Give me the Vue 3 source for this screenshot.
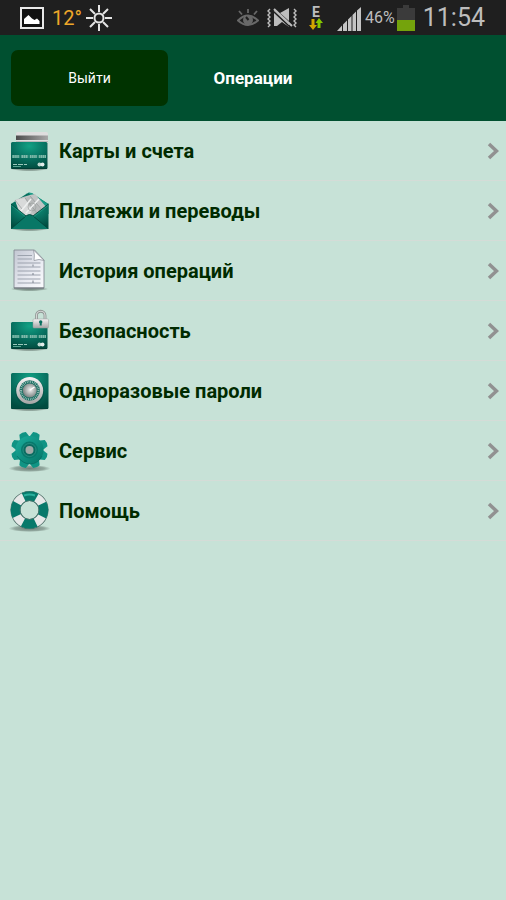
<template>
  <div class="screen">
    <div class="status-bar">
      <div class="status-left">
        <svg class="icon-picture" width="24" height="22" viewBox="0 0 24 22">
          <rect x="1" y="1" width="22" height="20" fill="#111" stroke="#e8e8e8" stroke-width="2" />
          <path d="M4 17V12L8.500 8L12 11.500L14.500 13L17 11.500L19.500 14V17Z" fill="#fff" />
        </svg>
        <span class="temperature">12°</span>
        <svg class="icon-sun" width="26" height="26" viewBox="0 0 26 26" fill="none" stroke="#e4e4e4" stroke-width="2">
          <circle cx="13" cy="13" r="4.500" />
          <path d="M13 0V7M13 19V26M0 13H7M19 13H26M4 4L9 9M17 17L22 22M22 4L17 9M9 17L4 22" />
        </svg>
      </div>

      <div class="status-right">
        <svg width="22" height="18" viewBox="0 0 22 18" fill="none" stroke="#686868">
          <path d="M1 11.500Q11 1.500 21 11.500Q11 20.500 1 11.500Z" stroke-width="2" />
          <circle cx="11" cy="11" r="5" fill="#686868" stroke="none" />
          <path d="M9 8L11.500 11" stroke="#1f1f1f" stroke-width="2" />
          <path d="M11 0V4M2 2L5 5.500M20 2L17 5.500" stroke-width="1.800" />
        </svg>
        <svg class="icon-mute" width="30" height="20" viewBox="0 0 30 20" fill="none" stroke="#bdbdbd">
          <path d="M3 1L1 3L3 5L1 7L3 9L1 11L3 13L1 15L3 17L1 19" stroke-width="1.400" />
          <path d="M27 1L29 3L27 5L29 7L27 9L29 11L27 13L29 15L27 17L29 19" stroke-width="1.400" />
          <path d="M7 4V18H10L15 14L22 19V16L7 2Z" fill="#bdbdbd" stroke="none" />
          <path d="M13 5L22 0V13Z" fill="#bdbdbd" stroke="none" />
          <path d="M6 3L23 19" stroke="#1f1f1f" stroke-width="1.500" />
          <path d="M7 1L25 18" stroke-width="2" />
        </svg>
        <div class="network">
          <span class="network-type">E</span>
          <svg width="14" height="12" viewBox="0 0 14 12">
            <path d="M2.500 1H5.500V7H8L4 12L0 7H2.500Z" fill="#d3a500" />
            <path d="M8.500 10H11.500V5H14L10 0L6.500 5H8.500Z" fill="#86c800" />
          </svg>
        </div>
        <svg class="icon-signal" width="24" height="24" viewBox="0 0 24 24">
          <path d="M0 24L5 18.500V24ZM6 24V17.500L10 13.500V24ZM11 24V12.500L14.500 9V24ZM15.500 24V8L19 4.500V24ZM20 24V3.500L24 0V24Z" fill="#c4c4c4" />
        </svg>
        <span class="battery-level">46%</span>
        <svg width="18" height="26" viewBox="0 0 18 26">
          <path d="M6 0H12V3H18V15H0V3H6Z" fill="#3b3b3b" />
          <rect y="15" width="18" height="11" fill="#74a30c" />
        </svg>
        <span class="clock">11:54</span>
      </div>
    </div>

    <header class="header">
      <button type="button" class="logout-btn">Выйти</button>
      <h1 class="title">Операции</h1>
    </header>

    <!-- Shared gradients for the menu icons -->
    <svg class="defs" width="0" height="0" aria-hidden="true">
      <defs>
        <radialGradient id="card" cx="0.5" cy="0.15" r="0.85">
          <stop offset="0" stop-color="#12a184" />
          <stop offset="0.5" stop-color="#087463" />
          <stop offset="1" stop-color="#014c40" />
        </radialGradient>
        <linearGradient id="silver" x1="0" y1="0" x2="0" y2="1">
          <stop offset="0" stop-color="#f4f4f4" />
          <stop offset="1" stop-color="#a5a5a5" />
        </linearGradient>
        <linearGradient id="stripe" x1="0" y1="0" x2="1" y2="0">
          <stop offset="0" stop-color="#4c4c4c" />
          <stop offset="1" stop-color="#a8a8a8" />
        </linearGradient>
        <linearGradient id="paper" x1="0" y1="0" x2="1" y2="1">
          <stop offset="0" stop-color="#c3c7d2" />
          <stop offset="0.6" stop-color="#e9ebf2" />
          <stop offset="1" stop-color="#fbfbfd" />
        </linearGradient>
        <linearGradient id="gear" gradientUnits="userSpaceOnUse" x1="8" y1="8" x2="36" y2="38">
          <stop offset="0" stop-color="#1cae9d" />
          <stop offset="1" stop-color="#047365" />
        </linearGradient>
        <radialGradient id="knob" cx="0.55" cy="0.45" r="0.6">
          <stop offset="0" stop-color="#f2f2f2" />
          <stop offset="1" stop-color="#6f7776" />
        </radialGradient>
        <radialGradient id="shadow">
          <stop offset="0" stop-color="#51615a" stop-opacity="0.75" />
          <stop offset="0.7" stop-color="#51615a" stop-opacity="0.45" />
          <stop offset="1" stop-color="#51615a" stop-opacity="0" />
        </radialGradient>
      </defs>
    </svg>

    <nav>
      <ul class="menu">
        <li v-for="item in items" :key="item.icon">
          <a href="#" class="menu-item" @click.prevent>
            <svg class="menu-icon" width="44" height="48" viewBox="0 0 44 48">
              <ellipse
                cx="21.500"
                :cy="item.round ? 41.5 : 42"
                :rx="item.round ? 21 : 19"
                :ry="item.round ? 3.5 : 2.2"
                fill="url(#shadow)"
              />

              <!-- Bank card, alone or with a padlock -->
              <template v-if="item.icon === 'cards' || item.icon === 'security'">
                <template v-if="item.icon === 'cards'">
                  <rect x="8" y="5" width="32" height="31" rx="1.500" fill="#dedede" />
                  <rect x="8" y="8.500" width="32" height="4.500" fill="url(#stripe)" />
                  <path d="M8 14.500H40" stroke="#b9b9b9" />
                </template>
                <rect x="3" y="15" width="36.500" height="27" rx="1.500" fill="url(#card)" />
                <path d="M3.500 41.500H39" stroke="#013d34" />
                <path d="M4 29.500H38" stroke="#7fb9aa" stroke-width="3" stroke-dasharray="7.300 1.600" />
                <path d="M4 29.500H38" stroke="#2c8876" stroke-width="3" stroke-dasharray="0.500 1.400" />
                <path d="M5 37.500H19" stroke="#9dcabd" stroke-dasharray="4 1 5 1" />
                <path d="M5 39.500H13" stroke="#5ba492" />
                <circle cx="31.500" cy="37.500" r="2" fill="#bfd8d0" />
                <circle cx="34.500" cy="37.500" r="2" fill="#e2ecea" />
                <template v-if="item.icon === 'security'">
                  <path d="M28.500 13V8.500A4.200 4.200 0 0 1 37 8.500V13" fill="none" stroke="#8d9391" stroke-width="2.800" />
                  <path d="M28.500 13V8.500A4.200 4.200 0 0 1 37 8.500V13" fill="none" stroke="#d4d7d6" stroke-width="1.200" />
                  <rect x="25" y="12" width="15.500" height="9" rx="1" fill="url(#silver)" stroke="#999e9c" stroke-width="0.500" />
                  <circle cx="32.700" cy="15" r="1.700" fill="#08705f" />
                  <path d="M32 15H33.500L33.800 18.500H31.700Z" fill="#08705f" />
                </template>
              </template>

              <template v-else-if="item.icon === 'payments'">
                <path d="M3 17L19 6.500Q21.500 5 24 6.500L40.500 17V27H3Z" fill="#05705f" />
                <path d="M20 5.500L24 6L40 17L37 24Z" fill="#1c9d88" />
                <path d="M7 13L15 10L22 8L27 7L39 21L32 31H13Z" fill="#c1c4c4" />
                <path d="M7 13L17 11L24 24L20 30H14Z" fill="#d8dada" />
                <path d="M17 11L23 9L35 26L27 29Z" fill="#b8bbbb" />
                <path d="M7 13L14 22M17 11L29 26M22 9L35 24" stroke="#959a99" stroke-width="0.700" />
                <path d="M13 24L23 12M18 26L31 12" stroke="#eef0f0" stroke-width="1.500" />
                <circle cx="24" cy="20" r="4" fill="none" stroke="#9da2a1" stroke-width="0.700" />
                <path d="M3 17L18 29H25L40.500 17V42H3Z" fill="url(#card)" />
                <path d="M3 42L18.500 28.500Q21.500 26.500 24.500 28.500L40.500 42Z" fill="#087766" />
                <path d="M3 17L18 29M40.500 17L25 29M3.500 41.500L18.500 28.500Q21.500 26.500 24.500 28.500L40 41.500" fill="none" stroke="#02473c" stroke-width="0.900" />
                <path d="M3.500 18.500L17.500 29.800M40 18.500L25.500 29.800" stroke="#2fa691" stroke-width="0.600" />
              </template>

              <template v-else-if="item.icon === 'history'">
                <path d="M6 3H26.500L36 13V41H6Z" fill="url(#paper)" stroke="#858b93" stroke-width="0.900" />
                <path d="M6 41H36" stroke="#6f757b" />
                <path d="M25.500 3Q27 8 26 13.500Q31 11.500 36 13.500Z" fill="#fff" stroke="#9297a0" stroke-width="0.800" />
                <path d="M9.500 8.500H24M9.500 12H24M9.500 16H32.500M9.500 20H32.500M9.500 24H32.500M9.500 28H32.500M9.500 32H32.500M9.500 36H32.500" stroke="#9ca2ad" stroke-width="1.100" />
                <path d="M25 17.500V19.500M25 26V28M25 33.500V36" stroke="#7c838f" />
              </template>

              <template v-else-if="item.icon === 'passwords'">
                <rect x="3" y="6" width="37.500" height="36" rx="1.500" fill="url(#card)" />
                <path d="M3.500 41.500H40" stroke="#01443a" />
                <circle cx="21.700" cy="24.500" r="14.500" fill="#04473d" opacity="0.500" />
                <circle cx="21.700" cy="23.500" r="13.500" fill="url(#silver)" />
                <circle cx="21.700" cy="23.500" r="10.200" fill="#1c6f63" />
                <circle cx="21.700" cy="23.500" r="8.700" fill="none" stroke="#b2d0c9" stroke-width="2" stroke-dasharray="0.700 1.100" />
                <circle cx="21.700" cy="23.500" r="7" fill="url(#knob)" />
                <path d="M22 23L26.500 20" stroke="#fff" stroke-width="1.500" />
              </template>

              <template v-else-if="item.icon === 'service'">
                <path
                  v-for="n in 8"
                  :key="n"
                  d="M16 12L18 5Q21.500 3.500 25 5L27 12Z"
                  fill="#109484"
                  :transform="`rotate(${n * 45 - 22.5} 21.5 23)`"
                />
                <circle cx="21.500" cy="23" r="14" fill="url(#gear)" />
                <path d="M9 29Q15 37 22 37Q30 37 34 29" fill="none" stroke="#035e53" opacity="0.500" />
                <circle cx="21.500" cy="23" r="8.500" fill="#08796c" />
                <circle cx="21.500" cy="23" r="6.500" fill="#0b6c61" stroke="#2b9487" stroke-width="0.800" />
                <circle cx="21.500" cy="23" r="4" fill="#a0aaa7" />
              </template>

              <template v-else>
                <circle cx="21.500" cy="23" r="14" fill="none" stroke="#4c6a64" stroke-width="10" />
                <circle cx="21.500" cy="23" r="14" fill="none" stroke="#e6e8e8" stroke-width="8.600" />
                <circle
                  cx="21.500"
                  cy="23"
                  r="14"
                  fill="none"
                  stroke="#08796b"
                  stroke-width="9.400"
                  stroke-dasharray="13 9"
                  transform="rotate(-26.5 21.5 23)"
                />
                <path d="M16 8.500Q21.500 6.500 27 8.500" fill="none" stroke="#2bb09e" stroke-width="2" />
                <circle cx="21.500" cy="23" r="9.500" fill="none" stroke="#3f766c" stroke-width="0.800" />
              </template>
            </svg>

            <span class="menu-label">{{ item.label }}</span>

            <svg class="chevron" width="12" height="18" viewBox="0 0 12 18">
              <path d="M2 2L9.500 9L2 16" fill="none" stroke="#919191" stroke-width="3.500" />
            </svg>
          </a>
        </li>
      </ul>
    </nav>
  </div>
</template>

<script setup>
const items = [
  { icon: 'cards', label: 'Карты и счета' },
  { icon: 'payments', label: 'Платежи и переводы' },
  { icon: 'history', label: 'История операций' },
  { icon: 'security', label: 'Безопасность' },
  { icon: 'passwords', label: 'Одноразовые пароли' },
  { icon: 'service', label: 'Сервис', round: true },
  { icon: 'help', label: 'Помощь', round: true },
]
</script>

<style>
body {
  margin: 0;
  background: #c7e2d7;
}
</style>

<style scoped>
.screen {
  min-height: 100vh;
  background: #c7e2d7;
  font-family: Roboto, 'Noto Sans', sans-serif;
}

svg {
  display: block;
  flex: none;
}

.defs {
  position: absolute;
}

/* Status bar */
.status-bar {
  display: flex;
  justify-content: space-between;
  height: 35px;
  padding: 0 21px 0 20px;
  background: #1f1f1f;
}

.status-left,
.status-right {
  display: flex;
  align-items: center;
}

.temperature {
  margin: 0 4px 0 8px;
  color: #eda72a;
  font-size: 20px;
  line-height: 24px;
}

.status-right {
  color: #bdbdbd;
}

.icon-mute {
  margin: 0 12px 0 8px;
}

.network {
  display: flex;
  flex-direction: column;
  align-items: center;
}

.network-type {
  font-size: 14px;
  font-weight: bold;
  line-height: 12px;
}

.icon-signal {
  margin: 4px 4px 4px 14px;
  align-self: flex-end;
}

.battery-level {
  margin-right: 2px;
  font-size: 16px;
}

.clock {
  margin-left: 8px;
  font-size: 25px;
  line-height: 35px;
}

/* Header */
.header {
  display: grid;
  grid-template-columns: 1fr auto 1fr;
  align-items: center;
  height: 86px;
  padding: 0 11px;
  background: #005030;
}

.logout-btn {
  width: 157px;
  height: 56px;
  border: none;
  border-radius: 7px;
  background: #003300;
  color: #fff;
  font-family: inherit;
  font-size: 14px;
  cursor: pointer;
}

.title {
  grid-column: 2;
  margin: 0;
  color: #fff;
  font-size: 17px;
  line-height: 24px;
}

/* Menu */
.menu {
  margin: 0;
  padding: 0;
  list-style: none;
}

.menu-item {
  display: flex;
  align-items: center;
  box-sizing: border-box;
  height: 60px;
  padding: 0 7px 0 8px;
  border-bottom: 1px solid #d4dcd7;
  color: #002b00;
  text-decoration: none;
}

.menu-label {
  flex: 1;
  margin-left: 7px;
  font-size: 20px;
  font-weight: bold;
  line-height: 24px;
}
</style>
